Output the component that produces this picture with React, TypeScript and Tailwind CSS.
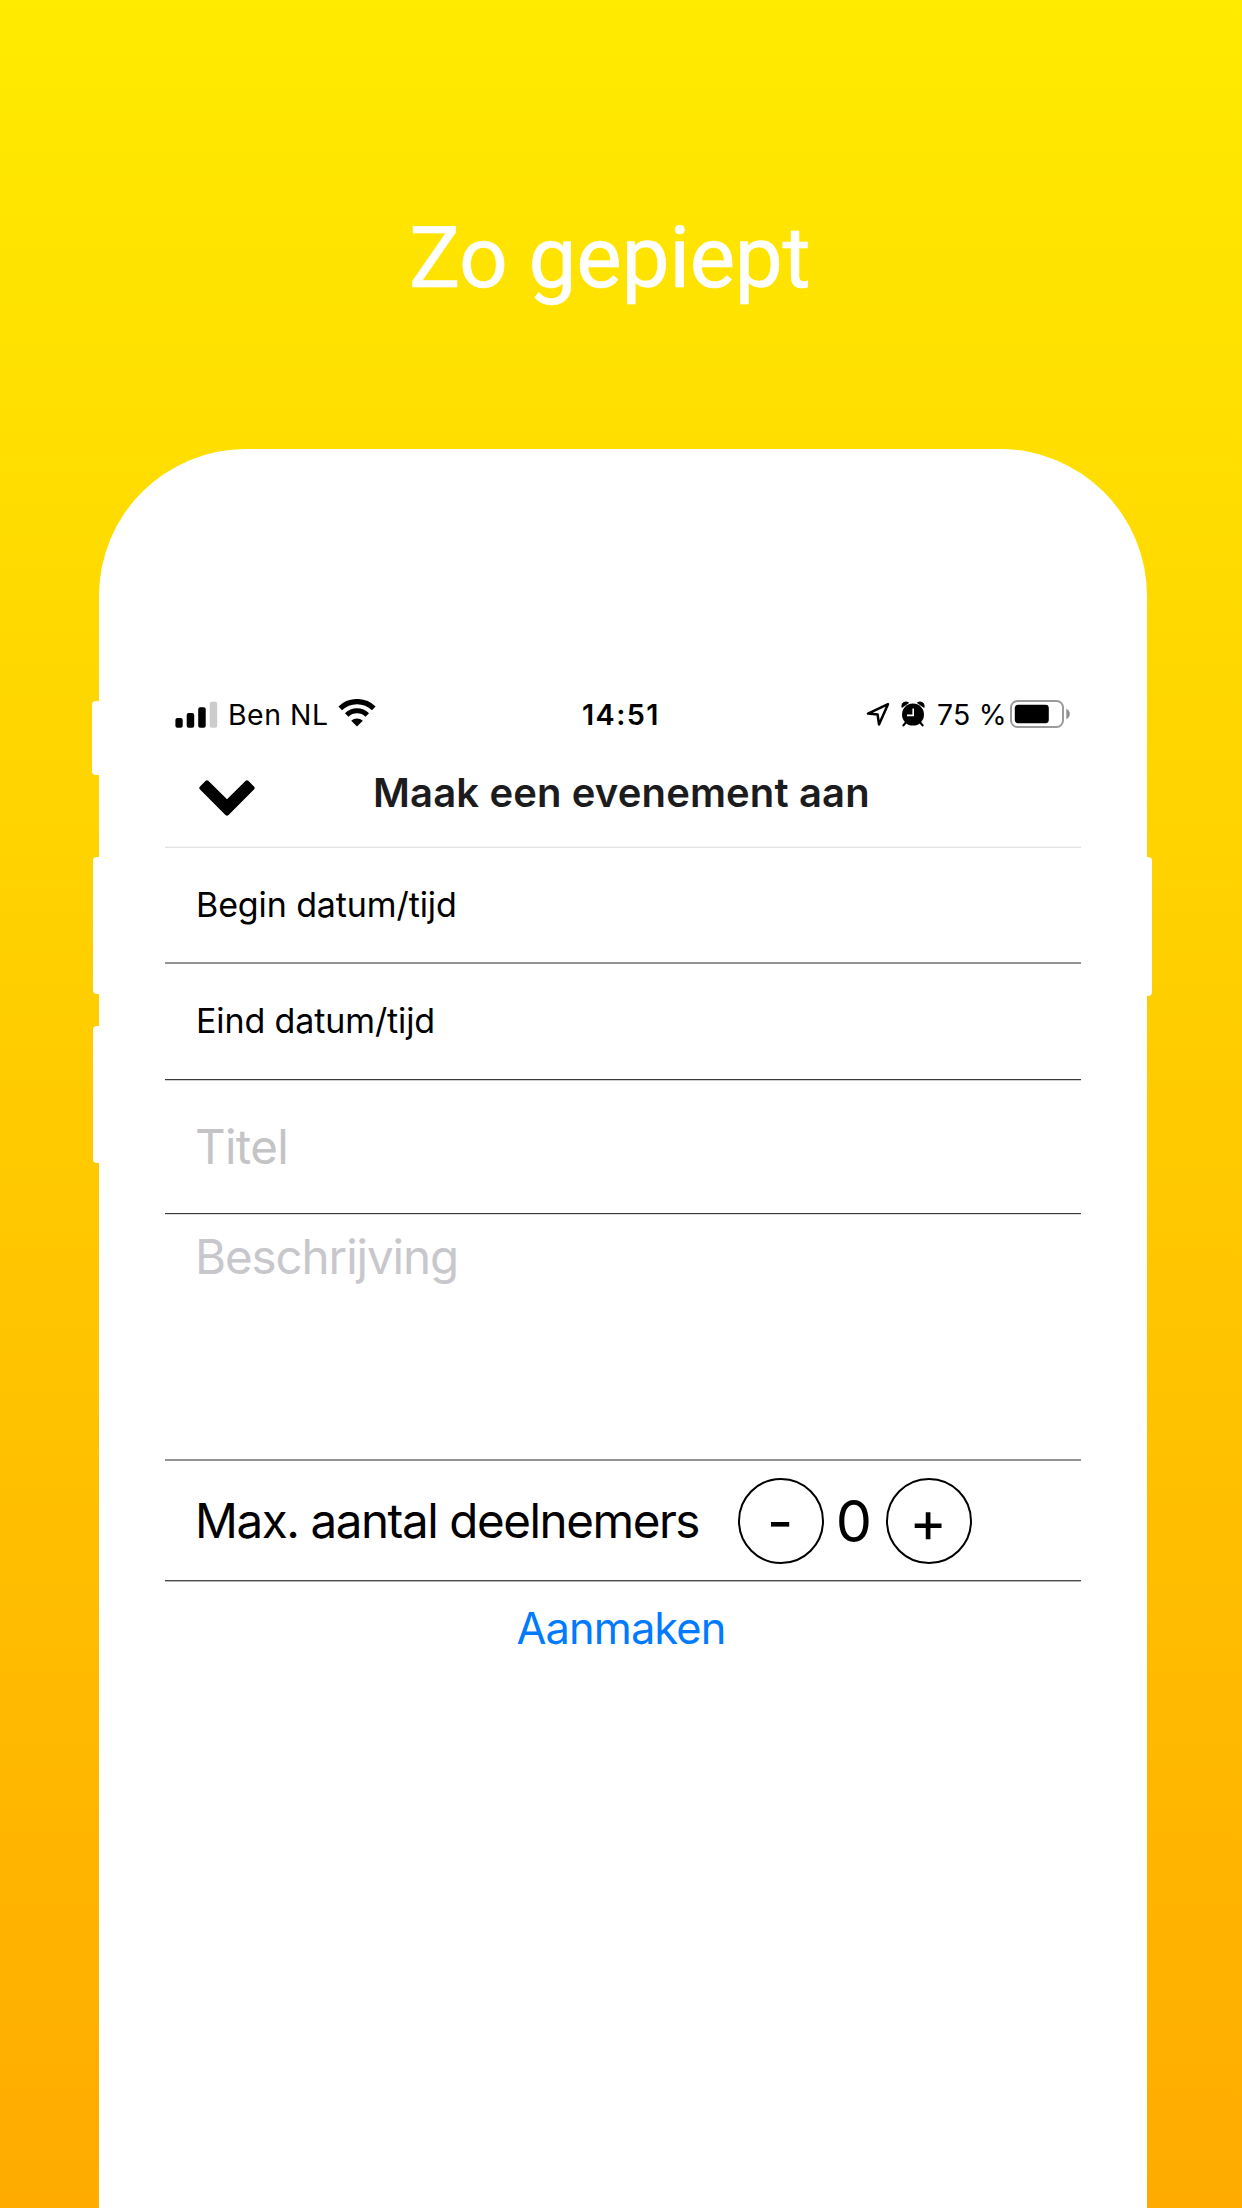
import { useState } from "react";
import type { ReactNode } from "react";

function SignalIcon() {
  return (
    <svg className="h-[27px] w-[43px]" viewBox="0 0 43 27">
      <rect x="0.4" y="17" width="7.3" height="9.7" rx="2" />
      <rect x="11.7" y="12" width="7.5" height="14.7" rx="2" />
      <rect x="23.2" y="6.3" width="7.5" height="20.4" rx="2" />
      <rect x="34.7" y="0.8" width="7.5" height="25.9" rx="2" fill="#cccccc" />
    </svg>
  );
}

function WifiIcon() {
  return (
    <svg className="h-[28px] w-[38px]" viewBox="0 0 38 28" fill="none" stroke="black">
      <path d="M2.2 9.3 A24.3 24.3 0 0 1 35.8 9.3" strokeWidth="5.2" />
      <path d="M8.7 16 A14.9 14.9 0 0 1 29.3 16" strokeWidth="5" />
      <path d="M19 27.6 L13.2 21.7 A8.6 8.6 0 0 1 24.8 21.7 Z" fill="black" stroke="none" />
    </svg>
  );
}

function LocationIcon() {
  return (
    <svg className="h-[26px] w-[24px]" viewBox="0 0 24 26" fill="none" stroke="black" strokeWidth="2.5" strokeLinejoin="round">
      <path d="M22 3.2 L2 12.6 L11.6 13.5 L13 23.4 Z" />
    </svg>
  );
}

function AlarmIcon() {
  return (
    <svg className="h-[26px] w-[24px]" viewBox="0 0 24 26">
      <circle cx="12" cy="13.6" r="11" />
      <path d="M1.2 6 A4 4 0 0 1 7.2 1.8 Z M22.8 6 A4 4 0 0 0 16.8 1.8 Z" stroke="black" strokeWidth="1.4" strokeLinejoin="round" />
      <path d="M4.4 22 L2.4 24.4 M19.6 22 L21.6 24.4" stroke="black" strokeWidth="2.2" strokeLinecap="round" />
      <path d="M12.2 7.4 V14.4 H6" stroke="white" strokeWidth="1.6" fill="none" />
    </svg>
  );
}

function BatteryIcon() {
  return (
    <svg className="h-[28px] w-[60px]" viewBox="0 0 60 28">
      <rect x="1" y="1" width="52" height="26" rx="6.5" fill="none" stroke="#9b9b9b" strokeWidth="2" />
      <rect x="4.8" y="4.8" width="34" height="18.4" rx="3.4" />
      <path d="M56.3 8.8 C61 11 61 17 56.3 19.2 Z" fill="#8f8f8f" />
    </svg>
  );
}

function StatusBar() {
  return (
    <div className="flex h-[70px] items-center pr-[11px] pl-[10px] text-[28.4px]">
      <div className="flex w-[407px] items-center">
        <SignalIcon />
        <span className="ml-[10px] w-[110px] tracking-[0.54px] whitespace-nowrap">Ben NL</span>
        <div className="-mt-[3px]">
          <WifiIcon />
        </div>
      </div>
      <span className="text-[28.8px] font-semibold tracking-[1.4px]">14:51</span>
      <div className="ml-auto flex items-center">
        <div className="-mt-[1px] flex gap-[11px]">
          <LocationIcon />
          <AlarmIcon />
        </div>
        <span className="ml-[12px] w-[73px] tracking-[0.2px] whitespace-nowrap">75 %</span>
        <div className="-mt-[1px]">
          <BatteryIcon />
        </div>
      </div>
    </div>
  );
}

function Header() {
  return (
    <header className="flex h-[98px] items-center border-b border-[#e2e2e2] pb-[11px] pl-[34px] shadow-[inset_0_-1px_0_#f5f5f5]">
      <button aria-label="Sluiten" className="mt-[10px]">
        <svg className="h-[36px] w-[56px]" viewBox="0 0 56 36">
          <path d="M8 2.6 L28 22.4 L48 2.6 L53.4 8 L28 33.4 L2.6 8 Z" stroke="black" strokeWidth="4.4" strokeLinejoin="round" />
        </svg>
      </button>
      <h1 className="ml-[118px] text-[40px] font-semibold tracking-[0.14px] whitespace-nowrap text-[#1c1c1e]">
        Maak een evenement aan
      </h1>
    </header>
  );
}

function StepButton({ children, onClick }: { children: ReactNode; onClick: () => void }) {
  return (
    <button
      onClick={onClick}
      className="flex size-[86px] items-center justify-center rounded-full border-2 border-black pt-[2px] pr-[2px] text-[57px] leading-none"
    >
      {children}
    </button>
  );
}

export default function App() {
  const [count, setCount] = useState(0);
  return (
    <main className="flex h-[2208px] w-[1242px] flex-col items-center overflow-hidden bg-linear-to-b/srgb from-[#ffeb00] to-[#ffab00] font-['Inter',sans-serif] text-black">
      <div className="flex h-[449px] w-full shrink-0 pt-[208px] pl-[409px]">
        <p className="font-['Roboto',sans-serif] text-[85.6px] leading-[100px] tracking-[-0.3px] whitespace-nowrap text-white [-webkit-text-stroke:0.6px_white]">
          Zo gepiept
        </p>
      </div>
      <div className="relative ml-[4px] w-[1048px] grow rounded-t-[147px] bg-white px-[66px] pt-[231px]">
        <div className="absolute top-[252px] -left-[7px] h-[74px] w-[10px] rounded-[4px] bg-white" />
        <div className="absolute top-[408px] -left-[6px] h-[137px] w-[10px] rounded-[4px] bg-white" />
        <div className="absolute top-[577px] -left-[6px] h-[137px] w-[10px] rounded-[4px] bg-white" />
        <div className="absolute top-[408px] -right-[5px] h-[139px] w-[10px] rounded-[4px] bg-white" />

        <StatusBar />
        <Header />
        <div className="flex h-[116px] items-center border-b-2 border-[#949494] pb-[2px] pl-[31px] text-[34px] tracking-[-0.11px]">
          Begin datum/tijd
        </div>
        <div className="flex h-[116px] items-center border-b border-[#3a3a3a] pb-[2px] pl-[31px] text-[34px] tracking-[-0.11px] shadow-[0_1px_0_#d0d0d0]">
          Eind datum/tijd
        </div>
        <div className="flex h-[134px] items-center border-b border-[#3a3a3a] pl-[30px] text-[47.5px] tracking-[-0.66px] text-[#c4c4c6] shadow-[0_1px_0_#dedede]">
          Titel
        </div>
        <div className="h-[247px] border-b-2 border-[#949494] pt-[13px] pl-[30px] text-[47.5px] leading-[60px] tracking-[-1.09px] text-[#c7c7cc]">
          Beschrijving
        </div>
        <div className="flex h-[120px] items-center border-b border-[#4a4a4a] pl-[30px] shadow-[0_1px_0_#b4b4b4]">
          <span className="w-[543px] text-[47.5px] tracking-[-1.42px] whitespace-nowrap">Max. aantal deelnemers</span>
          <StepButton onClick={() => setCount(Math.max(0, count - 1))}>-</StepButton>
          <span className="w-[62px] pt-[2px] pr-[2px] text-center text-[57.5px] leading-none">{count}</span>
          <StepButton onClick={() => setCount(count + 1)}>+</StepButton>
        </div>
        <button className="block h-[94px] w-full pt-[1px] pr-[4px] text-center text-[43.4px] tracking-[-0.9px] text-[#007aff]">
          Aanmaken
        </button>
      </div>
    </main>
  );
}
